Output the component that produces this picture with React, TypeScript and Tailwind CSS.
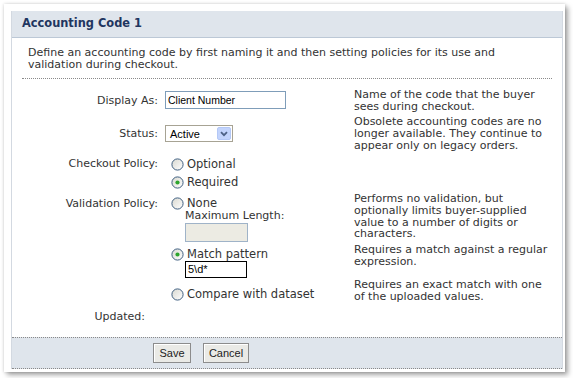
import React from 'react';

const verdana = "font-['DejaVu_Sans',Verdana,sans-serif]";
const tahoma = "font-['Liberation_Sans',Tahoma,sans-serif]";

function Radio({ checked }: { checked?: boolean }) {
  return (
    <svg width="13" height="13" viewBox="0 0 13 13" className="shrink-0">
      <defs>
        <linearGradient id={checked ? 'rg-on' : 'rg-off'} x1="0" y1="0" x2="1" y2="1">
          <stop offset="0" stopColor="#d8d8d0" />
          <stop offset="1" stopColor="#ffffff" />
        </linearGradient>
      </defs>
      <circle cx="6.5" cy="6.5" r="5.6" fill={`url(#${checked ? 'rg-on' : 'rg-off'})`} stroke="#3f5f80" strokeWidth="1" />
      {checked && <circle cx="6.5" cy="6.5" r="2.1" fill="#2da52d" />}
    </svg>
  );
}

function RadioLine({ label, checked, className = '' }: { label: string; checked?: boolean; className?: string }) {
  return (
    <div className={`flex items-center pl-[6px] gap-[3px] ${className}`}>
      <Radio checked={checked} />
      <span className="text-[11.5px] leading-[12px] text-[#333]">{label}</span>
    </div>
  );
}

function Help({ children }: { children: React.ReactNode }) {
  return <div className="text-[11px] leading-[11.7px] text-[#333] pr-[6px]">{children}</div>;
}

function Label({ children, className = '' }: { children: React.ReactNode; className?: string }) {
  return <div className={`text-right pr-[7px] text-[11px] leading-[12px] text-[#333] ${className}`}>{children}</div>;
}

export default function App() {
  const row = 'grid grid-cols-[153px_189px_1fr]';
  return (
    <div className={`w-[573px] h-[378px] bg-white pt-[4px] pl-[4px] overflow-hidden ${verdana}`}>
      <div className="w-[561px] h-[368px] bg-white pt-[7px] pl-[7px] pr-[2px] shadow-[0_0_3px_rgba(0,0,0,0.18),3px_3px_5px_rgba(0,0,0,0.35)]">
        <div className="border-x border-[#d3d9e1] h-[358px] flex flex-col">
          {/* header */}
          <div className="h-[27px] bg-[#dfe5ec] border-b border-[#bcc8d6] flex items-center pl-[10px]">
            <span className="text-[11.4px] font-bold text-[#1f3660]">Accounting Code 1</span>
          </div>

          {/* description */}
          <div className="pt-[9px] pl-[16px] pr-[20px] text-[11px] leading-[11.7px] text-[#333]">
            Define an accounting code by first naming it and then setting policies for its use and
            validation during checkout.
          </div>
          <div className="mt-[8px] mx-[10px] border-t border-dotted border-[#8a8a8a]" />

          {/* Display As */}
          <div className={`${row} mt-[10px] h-[27px]`}>
            <Label className="pt-[6px]">Display As:</Label>
            <div className="pt-[2px]">
              <div className={`w-[121px] h-[18px] border border-[#7f9db9] bg-white pl-[2px] flex items-center text-[10.5px] text-black ${tahoma}`}>
                Client Number
              </div>
            </div>
            <Help>
              Name of the code that the buyer
              <br />
              sees during checkout.
            </Help>
          </div>

          {/* Status */}
          <div className={`${row} h-[39px]`}>
            <Label className="pt-[12px]">Status:</Label>
            <div className="pt-[9px]">
              <div className={`w-[68px] h-[17px] border border-[#a7a394] bg-white flex items-center justify-between pl-[4px] pr-[1px] text-[11px] text-black ${tahoma}`}>
                <span>Active</span>
                <span className="w-[14px] h-[13px] rounded-[2px] bg-[#c3d4fc] border border-[#b4c8f6] flex items-center justify-center">
                  <svg width="8" height="6" viewBox="0 0 8 6">
                    <path d="M1 1.2 L4 4.2 L7 1.2" fill="none" stroke="#4d6185" strokeWidth="1.8" />
                  </svg>
                </span>
              </div>
            </div>
            <Help>
              Obsolete accounting codes are no
              <br />
              longer available. They continue to
              <br />
              appear only on legacy orders.
            </Help>
          </div>

          {/* Checkout Policy */}
          <div className={`${row} h-[38px]`}>
            <Label className="pt-[3px]">Checkout Policy:</Label>
            <div>
              <RadioLine label="Optional" className="h-[18px]" />
              <RadioLine label="Required" checked className="h-[18px]" />
            </div>
            <div />
          </div>

          {/* Validation Policy - None */}
          <div className={`${row} h-[51px]`}>
            <Label className="pt-[5px]">Validation Policy:</Label>
            <div>
              <RadioLine label="None" className="mt-[3px] h-[14px]" />
              <div className="pl-[20px] mt-[0px] text-[11px] leading-[12px] text-[#333]">Maximum Length:</div>
              <div className="ml-[20px] mt-[1px] w-[63px] h-[19px] border border-[#9fb3c8] bg-[#ecebe3]" />
            </div>
            <Help>
              Performs no validation, but
              <br />
              optionally limits buyer-supplied
              <br />
              value to a number of digits or
              <br />
              characters.
            </Help>
          </div>

          {/* Match pattern */}
          <div className={`${row} h-[35px]`}>
            <div />
            <div>
              <RadioLine label="Match pattern" checked className="mt-[3px] h-[14px]" />
              <div className={`ml-[20px] mt-[0px] w-[62px] h-[17px] border border-black bg-white pl-[2px] flex items-center text-[11px] text-black ${tahoma}`}>
                5\d*
              </div>
            </div>
            <Help>
              Requires a match against a regular
              <br />
              expression.
            </Help>
          </div>

          {/* Compare with dataset */}
          <div className={`${row} h-[26px]`}>
            <div />
            <div>
              <RadioLine label="Compare with dataset" className="mt-[6px] h-[18px]" />
            </div>
            <Help>
              Requires an exact match with one
              <br />
              of the uploaded values.
            </Help>
          </div>

          {/* Updated */}
          <div className={`${row} h-[32px]`}>
            <Label className="pt-[6px] pr-[20px]">Updated:</Label>
            <div />
            <div />
          </div>

          {/* footer */}
          <div className="bg-[#dfe5ec] border-y border-dotted border-[#8a8a8a] pt-[5px] pb-[5px] pl-[141px] flex gap-[12px]">
            <button className={`w-[38px] h-[20px] border border-[#8c8c8c] bg-[#eaeae6] shadow-[inset_1px_1px_0_#fff] text-[11px] text-[#222] ${tahoma}`}>
              Save
            </button>
            <button className={`w-[46px] h-[20px] border border-[#8c8c8c] bg-[#eaeae6] shadow-[inset_1px_1px_0_#fff] text-[11px] text-[#222] ${tahoma}`}>
              Cancel
            </button>
          </div>
        </div>
      </div>
    </div>
  );
}
